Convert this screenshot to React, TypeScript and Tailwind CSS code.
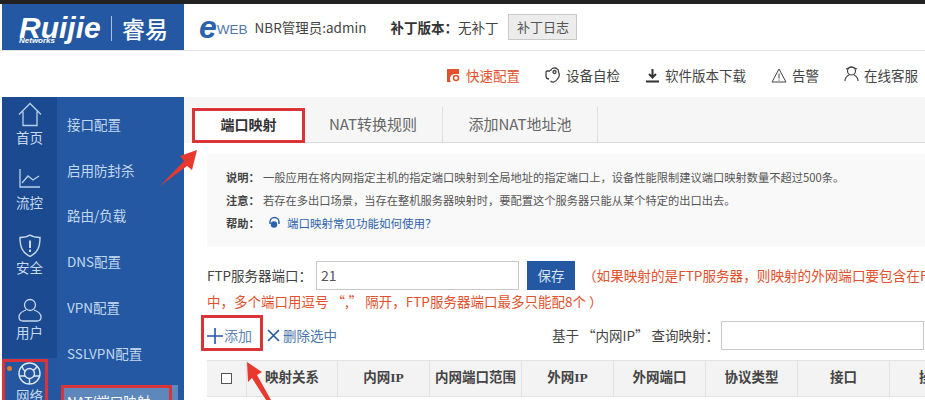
import React from "react";

const font = { fontFamily: '"Noto Sans CJK SC", "Noto Sans", sans-serif' };
const latin = { fontFamily: '"Liberation Sans", sans-serif' };

const subMenu = ["接口配置", "启用防封杀", "路由/负载", "DNS配置", "VPN配置", "SSLVPN配置"];

function Home() {
  return (
    <svg width="24" height="25" viewBox="0 0 24 25" fill="none" stroke="#b9d0ea" strokeWidth="1.3">
      <path d="M1 12.5 12 1.5l11 11M5 9.5V23.5H19V9.5" />
    </svg>
  );
}
function Chart() {
  return (
    <svg className="mb-[4px]" width="21" height="19" viewBox="0 0 21 19" fill="none" stroke="#b9d0ea" strokeWidth="1.3">
      <path d="M1 0V18H21M3 14l6-7 5 4 6-4" />
    </svg>
  );
}
function Shield() {
  return (
    <svg width="22" height="23" viewBox="0 0 22 23" fill="none" stroke="#c6d9ee" strokeWidth="1.4">
      <path d="M11 1c3 2 6 2.5 10 2.5 0 9-2 15-10 19C3 18.5 1 12.500 1 3.500 5 3.500 8 3 11 1Z" />
      <path d="M11 6.500v7.500M11 15.500v2.500" strokeWidth="2" />
    </svg>
  );
}
function User() {
  return (
    <svg width="24" height="24" viewBox="0 0 24 24" fill="none" stroke="#c6d9ee" strokeWidth="1.3">
      <circle cx="12" cy="7" r="5.500" />
      <path d="M8 12c-3 1-7 3-7 7 0 3 2 4 4 4h14c2 0 4-1 4-4 0-4-4-6-7-7" />
    </svg>
  );
}
function Globe() {
  return (
    <svg width="23" height="23" viewBox="0 0 23 23" fill="none" stroke="#dbe7f4" strokeWidth="1.4">
      <circle cx="11.500" cy="11.500" r="10.500" />
      <circle cx="11.500" cy="11.500" r="5" />
      <path d="M4 4c1 3 2 5 3.500 5M19 4c-1 3-3 4-4 4.500M11.500 16.500V22M2 14h5M16 14h5" />
    </svg>
  );
}

function NavItem({ icon, label, active }: { icon: React.ReactNode; label: string; active?: boolean }) {
  return (
    <div className={`flex h-[65px] flex-col items-center justify-start ${active ? "bg-[#24579f]" : ""}`}>
      <div className="flex h-[27px] items-end justify-center">{icon}</div>
      <span className="mt-[2px] text-[13.5px] leading-[17px] text-[#c6d9ee]">{label}</span>
    </div>
  );
}

function ToolItem({ icon, label, red }: { icon: React.ReactNode; label: string; red?: boolean }) {
  return (
    <div className={`flex items-center gap-[5px] text-[13.5px] ${red ? "text-[#e2512d]" : "text-[#444444]"}`}>
      {icon}
      <span>{label}</span>
    </div>
  );
}

export default function App() {
  const cols = ["映射关系", "内网IP", "内网端口范围", "外网IP", "外网端口", "协议类型", "接口"];
  return (
    <div className="relative h-[400px] w-[925px] overflow-hidden bg-white" style={font}>
      <div className="h-[4px] bg-[#222222]" />
      {/* top row */}
      <div className="flex h-[47px] border-b border-[#e4e4e4]">
        <div className="ml-[2px] flex w-[182px] items-center bg-[#2458a3] pl-[17px] pt-[2px]">
          <div className="relative flex items-center">
            <span className="w-[82px] text-[30px] font-bold italic leading-[22px] text-white" style={latin}>Ruijie</span>
            <span className="absolute left-0 top-[21px] text-[8px] font-bold italic leading-[8px] text-white" style={latin}>Networks</span>
            <span className="ml-[10px] h-[25px] w-px bg-[#a9c3e4]" />
            <span className="ml-[10px] text-[23px] font-medium leading-none text-white">睿易</span>
          </div>
        </div>
        <div className="flex items-center pl-[15px]">
          <span className="text-[32px] font-bold italic leading-none text-[#2d62ad]" style={latin}>e</span>
          <span className="mt-[5px] text-[13.5px] leading-none text-[#4f76ad]" style={latin}>WEB</span>
          <span className="ml-[7px] text-[13.5px] text-[#444444]">NBR管理员:admin</span>
          <span className="ml-[24px] text-[13.5px] font-bold text-[#333333]">补丁版本：</span>
          <span className="text-[13.5px] text-[#444444]">无补丁</span>
          <span className="ml-[10px] flex h-[26px] w-[69px] items-center justify-center border border-[#c9c9c9] bg-[#ececec] text-[13px] text-[#555555]">补丁日志</span>
        </div>
      </div>
      {/* toolbar */}
      <div className="flex h-[46px] items-center justify-end gap-[25px] pr-[7px] pt-[3px]">
        <ToolItem
          red
          label="快速配置"
          icon={
            <svg width="15" height="15" viewBox="0 0 15 15">
              <path d="M1 1h12v5H8a5 5 0 0 0-3 8H1Z" fill="#e2512d" />
              <circle cx="10" cy="10" r="2.500" fill="none" stroke="#e2512d" strokeWidth="1.500" />
            </svg>
          }
        />
        <ToolItem
          label="设备自检"
          icon={
            <svg width="16" height="17" viewBox="0 0 16 17" fill="none" stroke="#444" strokeWidth="1.300">
              <path d="M5 4H2.500C1 4 1 5 1 6v3c0 2 1 3 3 3M5.500 4a4 3.500 0 1 1 8 1c1 2 1 5-1 7-2 3-5 4-7 2" />
              <circle cx="9.500" cy="5" r="1.500" />
            </svg>
          }
        />
        <ToolItem
          label="软件版本下载"
          icon={
            <svg width="15" height="15" viewBox="0 0 15 15" fill="none" stroke="#333" strokeWidth="2">
              <path d="M7.500 1v8M4 6l3.500 3.500L11 6M1 13.500h13" />
            </svg>
          }
        />
        <ToolItem
          label="告警"
          icon={
            <svg width="16" height="15" viewBox="0 0 16 15" fill="none" stroke="#444" strokeWidth="1">
              <path d="M8 1 15 14H1ZM8 5.500v5M8 11.500v1.200" />
            </svg>
          }
        />
        <ToolItem
          label="在线客服"
          icon={
            <svg className="mb-[4px]" width="15" height="16" viewBox="0 0 15 16" fill="none" stroke="#444" strokeWidth="1.200">
              <circle cx="7.500" cy="5" r="4" />
              <path d="M5 9c-2 1-4 3-4 6M10 9c2 1 4 3 4 6M2 3 7 1l6 2" />
            </svg>
          }
        />
      </div>
      {/* main */}
      <div className="flex h-[303px]">
        <div className="ml-[2px] flex w-[182px] bg-[#2458a3]">
          <div className="w-[55px]">
            <div className="h-[261px] bg-[#1b4a90] pt-[3px]">
              <NavItem icon={<Home />} label="首页" />
              <NavItem icon={<Chart />} label="流控" />
              <NavItem icon={<Shield />} label="安全" />
              <NavItem icon={<User />} label="用户" />
            </div>
            <NavItem active icon={<Globe />} label="网络" />
          </div>
          <div className="flex flex-1 flex-col pt-[4px]">
            {subMenu.map((m) => (
              <div key={m} className="flex h-[45.8px] shrink-0 items-center pl-[10px] text-[13.5px] text-[#c3d8f0]">
                {m}
              </div>
            ))}
            <div className="ml-[4px] mt-[9px] h-[30px] w-[117px] whitespace-nowrap bg-[#5e87bc] pl-[6px] pt-[6px] text-[13.5px] text-white">NAT/端口映射</div>
          </div>
        </div>
        {/* content */}
        <div className="min-w-0 flex-1 bg-white">
          <div className="flex h-[46px] items-end bg-[#f6f6f6] pl-[9px]">
            <div className="flex h-[36px] w-full border-b border-[#d9d9d9]">
              <div className="flex w-[111px] items-center justify-center bg-white text-[14px] font-bold text-[#333333]">端口映射</div>
              <div className="flex w-[139px] items-center justify-center border-r border-[#e0e0e0] text-[15px] text-[#666666]">NAT转换规则</div>
              <div className="flex w-[155px] items-center justify-center border-r border-[#e0e0e0] text-[15px] text-[#666666]">添加NAT地址池</div>
            </div>
          </div>
          <div className="ml-[23px] mt-[11px] flex h-[93px] flex-col justify-center gap-[3px] bg-[#f9f9f9] pb-[2px] pl-[19px] text-[11.25px] leading-[20px] text-[#555555]">
            <p className="flex whitespace-nowrap"><b className="w-[37px] font-bold text-[#444444]">说明：</b>一般应用在将内网指定主机的指定端口映射到全局地址的指定端口上，设备性能限制建议端口映射数量不超过500条。</p>
            <p className="flex whitespace-nowrap"><b className="w-[37px] font-bold text-[#444444]">注意：</b>若存在多出口场景，当存在整机服务器映射时，要配置这个服务器只能从某个特定的出口出去。</p>
            <p className="flex items-center whitespace-nowrap"><b className="w-[42px] font-bold text-[#444444]">帮助：</b>
              <svg className="mr-[6px]" width="13" height="13" viewBox="0 0 13 13" fill="none" stroke="#2d62ad" strokeWidth="1.500">
                <path d="M2 8V6a4.500 4.500 0 0 1 9 0v2" />
                <circle cx="6" cy="8.500" r="2.500" fill="#2d62ad" />
              </svg>
              <span className="text-[11.5px] text-[#2d62ad]">端口映射常见功能如何使用？</span></p>
          </div>
          <div className="ml-[23px] w-[760px] pt-[14px]">
            <div className="flex h-[29px] items-center whitespace-nowrap text-[13.5px] text-[#444444]">
              <span className="w-[109px] shrink-0">FTP服务器端口：</span>
              <div className="flex h-[29px] w-[203px] shrink-0 items-center border border-[#c9c9c9] pl-[4px] text-[14px] text-[#555555]">21</div>
              <button className="ml-[8px] h-[29px] w-[48px] shrink-0 bg-[#2458a3] text-[13.5px] text-[#d5e3f3]">保存</button>
              <span className="ml-[8px] text-[13.6px] text-[#e2512d]">（如果映射的是FTP服务器，则映射的外网端口要包含在FTP服务</span>
            </div>
            <div className="h-[22px] whitespace-nowrap text-[13.5px] leading-[22px] text-[#e2512d]">中，多个端口用逗号 “,” 隔开，FTP服务器端口最多只能配8个 ）</div>
            <div className="mt-[9px] flex h-[29px] items-center whitespace-nowrap text-[13.5px]">
              <svg className="shrink-0" width="16" height="16" viewBox="0 0 16 16" stroke="#2458a3" strokeWidth="1.600"><path d="M8 0v16M0 8h16" /></svg>
              <span className="ml-[1px] text-[14px] text-[#5f84b4]">添加</span>
              <svg className="ml-[15px] shrink-0" width="13" height="13" viewBox="0 0 13 13" stroke="#2458a3" strokeWidth="1.600"><path d="M1 1l11 11M12 1 1 12" /></svg>
              <span className="ml-[3px] text-[#4a74aa]">删除选中</span>
              <span className="ml-[215px] w-[169px] shrink-0 text-[13.5px] text-[#444444]">基于 “内网IP” 查询映射：</span>
              <div className="h-[29px] w-[203px] shrink-0 border border-[#c9c9c9]" />
            </div>
            <div className="mt-[10px] flex h-[37px] w-[760px] border-y border-[#e2e2e2] bg-[#f3f3f3] text-[13.5px] font-bold text-[#444444]" style={{ fontFamily: '"Liberation Serif", "Noto Sans CJK SC", serif' }}>
              <div className="flex w-[40px] shrink-0 items-center justify-center border-r border-[#e2e2e2]">
                <span className="h-[11px] w-[11px] border border-[#555555] bg-white" />
              </div>
              {cols.map((c, i) => (
                <div key={c} className={`flex shrink-0 items-center justify-center whitespace-nowrap border-r border-[#e2e2e2] ${i === 0 ? "w-[91px]" : "w-[92px]"}`}>{c}</div>
              ))}
              <div className="flex flex-1 items-center pl-[29px]">操作</div>
            </div>
          </div>
        </div>
      </div>
      {/* annotations */}
      <div className="absolute left-[192px] top-[108px] h-[35px] w-[113px] border-[3px] border-[#d8343a]" />
      <div className="absolute left-[2px] top-[359px] h-[45px] w-[46px] border-[3px] border-[#d8343a]" />
      <div className="absolute left-[61px] top-[385px] h-[20px] w-[111px] border-[3px] border-[#d8343a]" />
      <div className="absolute left-[201px] top-[315px] h-[36px] w-[62px] border-[3px] border-[#d8343a]" />
      <span className="absolute left-[7px] top-[366px] h-[5px] w-[5px] rounded-full bg-[#e8762f]" />
      <svg className="absolute left-[155px] top-[145px]" width="50" height="45" viewBox="155 145 50 45">
        <path d="M197 150 180 156 184 161 160 186 187 166 192 170Z" fill="#e8392f" />
      </svg>
      <svg className="absolute left-[240px] top-[358px]" width="40" height="42" viewBox="240 358 40 42">
        <path d="M247 362 262 372 257 375 271 400 266 400 252 378 248 382Z" fill="#e8392f" />
      </svg>
    </div>
  );
}
